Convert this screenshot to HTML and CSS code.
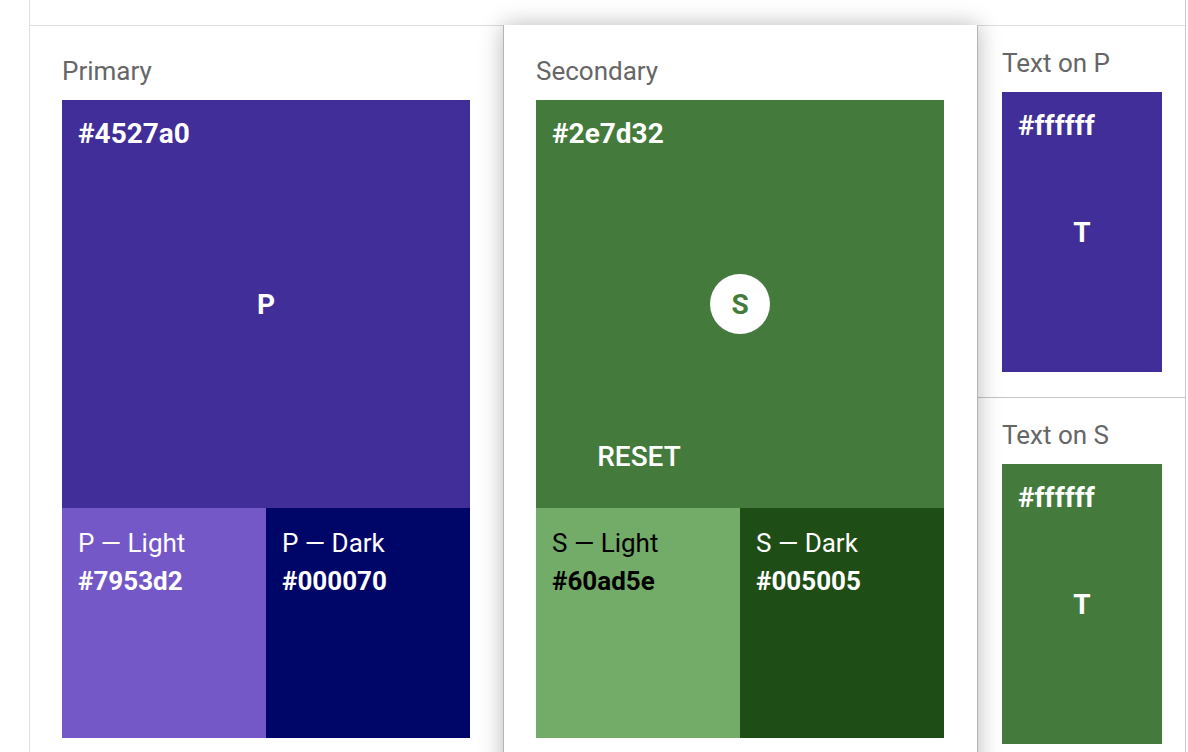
FILE: index.html
```html
<!DOCTYPE html>
<html>
<head>
<meta charset="utf-8">
<link rel="stylesheet" href="styles.css">
</head>
<body>
<div class="frame">
  <div class="topbar"></div>
  <div class="grid">
    <section class="card card-primary">
      <h2 class="title">Primary</h2>
      <div class="swatch-main bg-p">
        <div class="hex">#4527a0</div>
        <div class="center-letter">P</div>
      </div>
      <div class="swatch-row">
        <div class="swatch-half bg-pl">
          <div class="label">P — Light</div>
          <div class="hex-sm">#7953d2</div>
        </div>
        <div class="swatch-half bg-pd">
          <div class="label">P — Dark</div>
          <div class="hex-sm">#000070</div>
        </div>
      </div>
    </section>
    <section class="card card-secondary">
      <h2 class="title">Secondary</h2>
      <div class="swatch-main bg-s">
        <div class="hex">#2e7d32</div>
        <div class="circle">S</div>
        <div class="reset">RESET</div>
      </div>
      <div class="swatch-row">
        <div class="swatch-half bg-sl dark-text">
          <div class="label">S — Light</div>
          <div class="hex-sm">#60ad5e</div>
        </div>
        <div class="swatch-half bg-sd">
          <div class="label">S — Dark</div>
          <div class="hex-sm">#005005</div>
        </div>
      </div>
    </section>
    <div class="side">
      <section class="side-card side-first">
        <h2 class="title">Text on P</h2>
        <div class="swatch-text bg-p">
          <div class="hex">#ffffff</div>
          <div class="center-letter">T</div>
        </div>
      </section>
      <section class="side-card">
        <h2 class="title">Text on S</h2>
        <div class="swatch-text bg-s">
          <div class="hex">#ffffff</div>
          <div class="center-letter">T</div>
        </div>
      </section>
    </div>
  </div>
</div>
</body>
</html>
```

FILE: styles.css
```css
* { box-sizing: border-box; }
html, body { margin: 0; padding: 0; background: #fff; }
body {
  font-family: Roboto, "Liberation Sans", sans-serif;
  width: 1188px;
  height: 752px;
  overflow: hidden;
}
.frame {
  margin-left: 29px;
  width: 1157px;
  height: 752px;
  border-left: 1px solid #e0e0e0;
  border-right: 1px solid #c8c8c8;
}
.topbar { height: 25px; }
.grid {
  display: flex;
  border-top: 1px solid #dcdcdc;
  align-items: flex-start;
}
.title {
  margin: 0 0 15px 0;
  font-size: 26px;
  font-weight: 400;
  line-height: 28px;
  color: #666;
}
.card { padding: 31px 33px 40px 32px; }
.card-primary { width: 473px; height: 800px; padding-bottom: 0; }
.card-secondary {
  width: 475px;
  border-left: 1px solid #b4b4b4;
  border-right: 1px solid #b4b4b4;
  box-shadow: 0 0 22px rgba(0,0,0,0.28);
  position: relative;
  z-index: 2;
  background: #fff;
  margin-top: -1px;
  padding-top: 32px;
  min-height: 800px;
}
.swatch-main {
  position: relative;
  width: 408px;
  height: 408px;
  padding: 16px;
  color: #fff;
}
.hex {
  font-size: 28px;
  font-weight: 700;
  line-height: 36px;
}
.center-letter {
  position: absolute;
  left: 0; right: 0; top: 50%;
  transform: translateY(-50%);
  text-align: center;
  font-size: 28px;
  font-weight: 700;
}
.circle {
  position: absolute;
  left: 50%; top: 50%;
  width: 60px; height: 60px;
  margin: -30px 0 0 -30px;
  border-radius: 50%;
  background: #fff;
  color: #447b3c;
  font-size: 28px;
  font-weight: 700;
  display: flex;
  align-items: center;
  justify-content: center;
}
.reset {
  position: absolute;
  left: 1px; width: 50%;
  bottom: 36px;
  text-align: center;
  font-size: 28px;
  font-weight: 500;
  line-height: 30px;
}
.swatch-row { display: flex; width: 408px; height: 230px; }
.swatch-half {
  flex: 1;
  padding: 16px;
  color: #fff;
}
.label { font-size: 26px; line-height: 38px; font-weight: 400; }
.hex-sm { font-size: 26px; font-weight: 700; line-height: 38px; }
.dark-text { color: #000; }

.side { width: 207px; }
.side-card { padding: 23px 23px 25px 24px; }
.side-first { border-bottom: 1px solid #c4c4c4; }
.swatch-text {
  position: relative;
  width: 160px;
  height: 280px;
  padding: 16px;
  color: #fff;
}

.bg-p { background: #412e98; }
.bg-pl { background: #7558c8; }
.bg-pd { background: #000668; }
.bg-s { background: #447b3c; }
.bg-sl { background: #73ab68; }
.bg-sd { background: #1e4d15; }
```
